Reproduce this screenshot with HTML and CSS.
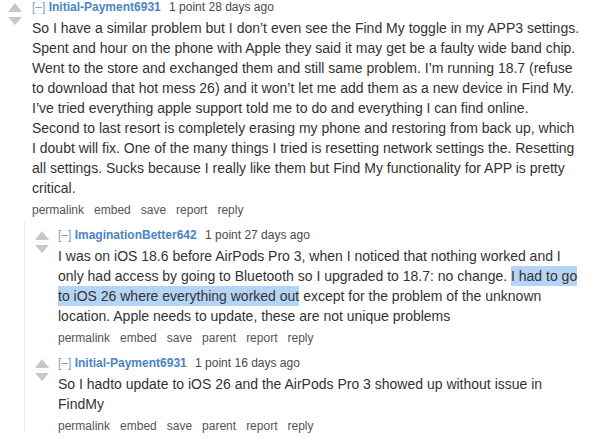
FILE: index.html
```html
<!DOCTYPE html>
<html lang="en">
<head>
<meta charset="utf-8">
<title>Comments</title>
<link rel="stylesheet" href="styles.css">
</head>
<body>
<div class="thread">
  <div class="comment top">
    <div class="votes"><span class="arrow up"></span><span class="arrow down"></span></div>
    <div class="entry">
      <p class="tagline"><span class="expand">[–]</span> <span class="author">Initial-Payment6931</span> <span class="meta">1 point 28 days ago</span></p>
      <p class="body">So I have a similar problem but I don’t even see the Find My toggle in my APP3 settings.<br>Spent and hour on the phone with Apple they said it may get be a faulty wide band chip.<br>Went to the store and exchanged them and still same problem. I’m running 18.7 (refuse<br>to download that hot mess 26) and it won’t let me add them as a new device in Find My.<br>I’ve tried everything apple support told me to do and everything I can find online.<br>Second to last resort is completely erasing my phone and restoring from back up, which<br>I doubt will fix. One of the many things I tried is resetting network settings the. Resetting<br>all settings. Sucks because I really like them but Find My functionality for APP is pretty<br>critical.</p>
      <ul class="actions"><li>permalink</li><li>embed</li><li>save</li><li>report</li><li>reply</li></ul>
    </div>
  </div>
  <div class="children">
    <div class="comment">
      <div class="votes"><span class="arrow up"></span><span class="arrow down"></span></div>
      <div class="entry">
        <p class="tagline"><span class="expand">[–]</span> <span class="author">ImaginationBetter642</span> <span class="meta">1 point 27 days ago</span></p>
        <p class="body">I was on iOS 18.6 before AirPods Pro 3, when I noticed that nothing worked and I<br>only had access by going to Bluetooth so I upgraded to 18.7: no change. <span class="sel">I had to go </span><br><span class="sel">to iOS 26 where everything worked out</span> except for the problem of the unknown<br>location. Apple needs to update, these are not unique problems</p>
        <ul class="actions"><li>permalink</li><li>embed</li><li>save</li><li>parent</li><li>report</li><li>reply</li></ul>
      </div>
    </div>
    <div class="comment">
      <div class="votes"><span class="arrow up"></span><span class="arrow down"></span></div>
      <div class="entry">
        <p class="tagline"><span class="expand">[–]</span> <span class="author">Initial-Payment6931</span> <span class="meta">1 point 16 days ago</span></p>
        <p class="body">So I hadto update to iOS 26 and the AirPods Pro 3 showed up without issue in<br>FindMy</p>
        <ul class="actions"><li>permalink</li><li>embed</li><li>save</li><li>parent</li><li>report</li><li>reply</li></ul>
      </div>
    </div>
  </div>
</div>
</body>
</html>
```

FILE: styles.css
```css
html, body {
  margin: 0;
  padding: 0;
  background: #ffffff;
}

body {
  font-family: "Liberation Sans", Arial, sans-serif;
  color: #333333;
  overflow: hidden;
}

.thread {
  padding: 0;
}

.comment {
  display: flex;
  gap: 10px;
}

.comment.top {
  padding-left: 8px;
}

.votes {
  width: 14px;
  flex: none;
  display: flex;
  flex-direction: column;
  align-items: center;
  gap: 5px;
  padding-top: 3px;
}

.arrow {
  display: block;
  width: 0;
  height: 0;
  border-left: 7px solid transparent;
  border-right: 7px solid transparent;
}

.arrow.up {
  border-bottom: 9px solid #c7c7c7;
}

.arrow.down {
  border-top: 8px solid #c7c7c7;
}

.entry {
  flex: 1;
  min-width: 0;
}

.tagline {
  margin: 0;
  font-size: 12px;
  line-height: 14px;
  white-space: nowrap;
}

.expand {
  color: #7d9cc6;
}

.author {
  color: #4b84c4;
  font-weight: bold;
  margin-right: 5px;
}

.meta {
  color: #4a4a4a;
}

.body {
  margin: 4px 0 0;
  font-size: 14px;
  line-height: 20px;
  white-space: nowrap;
  color: #333333;
}

.sel {
  background: #b6d4f8;
  padding: 2px 0;
}

.actions {
  list-style: none;
  margin: 5px 0 0;
  padding: 0;
  display: flex;
  gap: 10px;
  font-size: 12px;
  line-height: 14px;
  color: #555555;
}

.children {
  margin: 5px 0 0 24px;
  border-left: 1px solid #ececec;
  padding-left: 10px;
  display: flex;
  flex-direction: column;
  gap: 11px;
}

.children > .comment:first-child {
  padding-top: 6px;
}

.children .comment {
  gap: 9px;
}
```
